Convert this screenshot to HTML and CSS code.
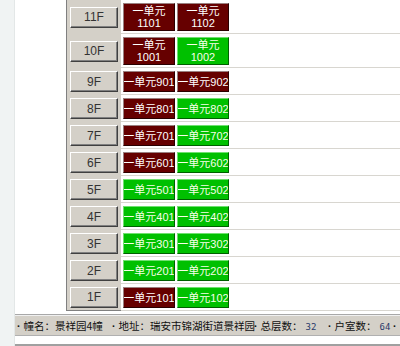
FILE: index.html
```html
<!DOCTYPE html>
<html>
    <head>
        <meta charset="utf-8">
        <link rel="stylesheet" href="styles.css">
    </head>
    <body>
        <div class="page">
            <div class="side"></div>
            <div class="main">
                <div class="content">
                    <div class="building">
                        <div class="row tall">
                            <div class="floor"><div class="fbtn">11F</div></div>
                            <div class="rooms">
                                <div class="room red">一单元<br>1101</div>
                                <div class="room red">一单元<br>1102</div>
                            </div>
                        </div>
                        <div class="row tall">
                            <div class="floor"><div class="fbtn">10F</div></div>
                            <div class="rooms">
                                <div class="room red">一单元<br>1001</div>
                                <div class="room green">一单元<br>1002</div>
                            </div>
                        </div>
                        <div class="row">
                            <div class="floor"><div class="fbtn">9F</div></div>
                            <div class="rooms">
                                <div class="room red">一单元901</div>
                                <div class="room red">一单元902</div>
                            </div>
                        </div>
                        <div class="row">
                            <div class="floor"><div class="fbtn">8F</div></div>
                            <div class="rooms">
                                <div class="room red">一单元801</div>
                                <div class="room green">一单元802</div>
                            </div>
                        </div>
                        <div class="row">
                            <div class="floor"><div class="fbtn">7F</div></div>
                            <div class="rooms">
                                <div class="room red">一单元701</div>
                                <div class="room green">一单元702</div>
                            </div>
                        </div>
                        <div class="row">
                            <div class="floor"><div class="fbtn">6F</div></div>
                            <div class="rooms">
                                <div class="room red">一单元601</div>
                                <div class="room green">一单元602</div>
                            </div>
                        </div>
                        <div class="row">
                            <div class="floor"><div class="fbtn">5F</div></div>
                            <div class="rooms">
                                <div class="room green">一单元501</div>
                                <div class="room green">一单元502</div>
                            </div>
                        </div>
                        <div class="row">
                            <div class="floor"><div class="fbtn">4F</div></div>
                            <div class="rooms">
                                <div class="room green">一单元401</div>
                                <div class="room green">一单元402</div>
                            </div>
                        </div>
                        <div class="row">
                            <div class="floor"><div class="fbtn">3F</div></div>
                            <div class="rooms">
                                <div class="room green">一单元301</div>
                                <div class="room green">一单元302</div>
                            </div>
                        </div>
                        <div class="row">
                            <div class="floor"><div class="fbtn">2F</div></div>
                            <div class="rooms">
                                <div class="room green">一单元201</div>
                                <div class="room green">一单元202</div>
                            </div>
                        </div>
                        <div class="row last">
                            <div class="floor"><div class="fbtn">1F</div></div>
                            <div class="rooms">
                                <div class="room red">一单元101</div>
                                <div class="room green">一单元102</div>
                            </div>
                        </div>
                    </div>
                </div>
                <div class="status">
                    <span class="item i-name"><span class="dot">·</span>幢名：景祥园4幢</span>
                    <span class="item i-addr"><span class="dot">·</span>地址：瑞安市锦湖街道景祥园</span>
                    <span class="item i-floors"><span class="dot">·</span>总层数：<span class="num">32</span></span>
                    <span class="item i-rooms"><span class="dot">·</span>户室数：<span class="num">64</span></span>
                    <span class="item"><span class="dot">·</span></span>
                </div>
                <div class="foot"></div>
            </div>
        </div>
    </body>
</html>
```

FILE: styles.css
```css
body{
    margin:0;
    background-color:#f0f3f3;
    font-family:"Liberation Sans", "Noto Sans CJK SC", sans-serif;
}
.page{
    display:flex;
    height:346px;
    overflow:hidden;
}
.side{
    width:14px;
    flex-shrink:0;
    background-color:#f0f3f3;
    border-right:1px solid #e3e7e7;
}
.main{
    flex:1;
    min-width:0;
    display:flex;
    flex-direction:column;
    background-color:white;
}
.content{
    height:315px;
    border-bottom:1px solid #a8a8a8;
    box-sizing:border-box;
    padding-left:51px;
}
.building{
    border-left:1px solid #808080;
}
.row{
    display:flex;
}
.floor{
    width:54px;
    flex-shrink:0;
    background-color:#d4d0c8;
    display:flex;
    align-items:center;
    padding-left:3px;
    box-sizing:border-box;
}
.row.last .floor{
    border-bottom:1px solid #808080;
}
.fbtn{
    width:48px;
    height:21px;
    box-sizing:border-box;
    border-top:1px solid white;
    border-left:1px solid white;
    border-right:1px solid #404040;
    border-bottom:1px solid #404040;
    box-shadow:inset -1px -1px 0 #808080;
    display:flex;
    align-items:center;
    justify-content:center;
    font-size:12px;
    color:#333;
}
.rooms{
    flex:1;
    display:flex;
    gap:2px;
    padding:3px 0 2px 2px;
    border-bottom:1px solid #d8d6d0;
}
.room{
    width:52px;
    height:21px;
    box-sizing:border-box;
    border:1px solid;
    color:white;
    font-size:11px;
    line-height:12px;
    text-align:center;
    white-space:nowrap;
    overflow:hidden;
    display:flex;
    align-items:center;
    justify-content:center;
}
.tall .room{
    height:28px;
    display:block;
    padding-top:1px;
}
.red{
    background-color:#660000;
    border-color:#9a8080 #2a0000 #2a0000 #9a8080;
}
.green{
    background-color:#00c000;
    border-color:#70e070 #006000 #006000 #70e070;
    color:#f8ffe8;
}
.status{
    height:19px;
    background-color:#d4d0c8;
    border-top:1px solid #f0f0f0;
    border-bottom:1px solid #b0b0b0;
    display:flex;
    align-items:center;
    font-family:"Noto Sans CJK SC", sans-serif;
    font-size:10.5px;
    color:#111;
    white-space:nowrap;
    padding-left:2px;
}
.item{
    flex-shrink:0;
}
.dot{
    font-family:"Liberation Sans", sans-serif;
    font-weight:bold;
    margin-right:3px;
}
.i-name{
    width:95px;
}
.i-addr{
    width:142px;
}
.i-floors{
    width:74px;
}
.i-rooms{
    width:65px;
}
.num{
    margin-left:3px;
    font-family:"DejaVu Sans Mono", monospace;
    font-size:9px;
    color:#2a3a6a;
}
.foot{
    flex:1;
    background-color:white;
    border-top:8px solid white;
    border-bottom:2px solid #a0a0a0;
}
```
